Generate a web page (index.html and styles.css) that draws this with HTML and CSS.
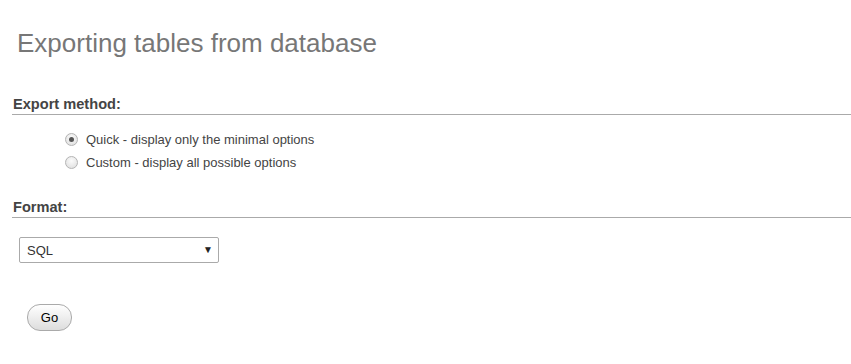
FILE: index.html
```html
<!DOCTYPE html>
<html lang="en">
<head>
    <meta charset="UTF-8">
    <title>Export</title>
    <link rel="stylesheet" href="styles.css">
</head>
<body>
    <h2 class="page-title">Exporting tables from database</h2>

    <div class="export-section">
        <h3 class="section-head">Export method:</h3>
        <ul class="option-list">
            <li>
                <input type="radio" name="method" id="quick" checked>
                <label for="quick">Quick - display only the minimal options</label>
            </li>
            <li>
                <input type="radio" name="method" id="custom">
                <label for="custom">Custom - display all possible options</label>
            </li>
        </ul>
    </div>

    <div class="export-section">
        <h3 class="section-head">Format:</h3>
        <div class="select-wrap">
            <select id="format">
                <option>SQL</option>
            </select>
            <span class="select-arrow">&#9660;</span>
        </div>
    </div>

    <div class="actions">
        <button type="button" class="go-btn">Go</button>
    </div>
</body>
</html>
```
FILE: styles.css
```css
body {
    margin: 0;
    padding: 0 0 0 12px;
    font-family: 'Liberation Sans', Arial, sans-serif;
    font-size: 13px;
    color: #444;
    background-color: #fff;
}
.page-title {
    margin: 0;
    padding: 27px 0 0 5px;
    font-size: 26px;
    font-weight: normal;
    line-height: 32px;
    color: #777;
}
.export-section {
    margin-top: 37px;
}
.export-section + .export-section {
    margin-top: 25px;
}
.section-head {
    margin: 0;
    padding: 0 0 1px 1px;
    font-size: 14.6px;
    font-weight: bold;
    line-height: 17px;
    color: #444;
    border-bottom: 1px solid #aaa;
}
.option-list {
    list-style: none;
    margin: 13px 0 0;
    padding: 0 0 0 53px;
}
.option-list li {
    display: flex;
    align-items: center;
    height: 23px;
}
.option-list input {
    appearance: none;
    -webkit-appearance: none;
    position: relative;
    margin: 0 8px 0 0;
    width: 13px;
    height: 13px;
    border: 1px solid #b4b4b4;
    border-radius: 50%;
    background: radial-gradient(circle at 50% 35%, #fbfbfb, #dcdcdc);
}
.option-list input:checked::after {
    content: "";
    position: absolute;
    left: 3px;
    top: 3px;
    width: 5px;
    height: 5px;
    border-radius: 50%;
    background-color: #555;
}
.select-wrap {
    position: relative;
    width: 200px;
    margin: 19px 0 0 7px;
}
select {
    appearance: none;
    -webkit-appearance: none;
    width: 200px;
    height: 26px;
    padding: 0 7px;
    font-family: inherit;
    font-size: 13px;
    color: #333;
    background-color: #fff;
    border: 1px solid #aaa;
    border-radius: 2px;
}
.select-arrow {
    position: absolute;
    right: 6px;
    top: 8px;
    font-size: 10px;
    line-height: 10px;
    color: #222;
    pointer-events: none;
}
.actions {
    margin: 41px 0 0 15px;
}
.go-btn {
    width: 45px;
    height: 27px;
    padding: 0;
    font-family: inherit;
    font-size: 13px;
    color: #000;
    border: 1px solid #aaa;
    border-radius: 13px;
    background: linear-gradient(#fff, #ddd);
    cursor: pointer;
}
```
